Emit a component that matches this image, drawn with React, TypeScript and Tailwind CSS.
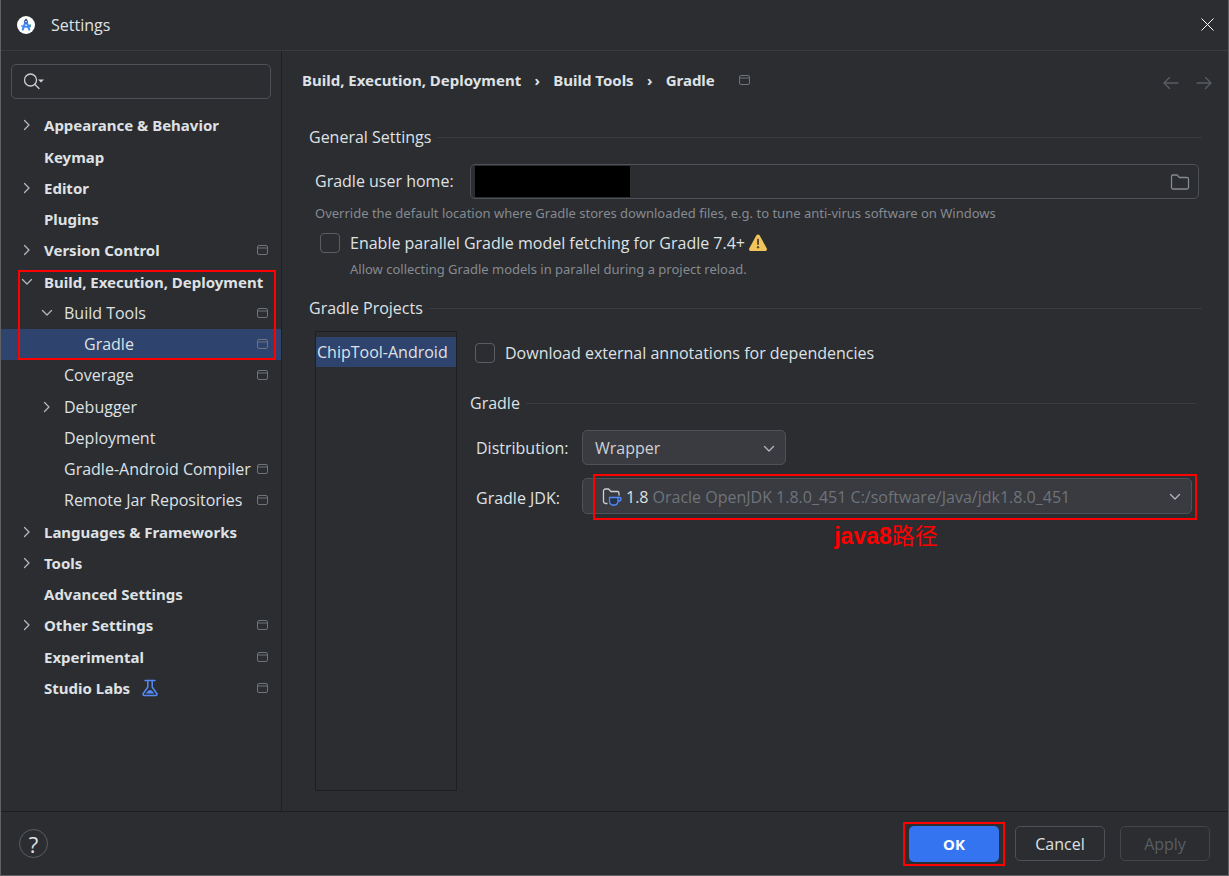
import React, { useState } from 'react';

interface TreeItem {
  label: string;
  level: number;
  /** Only set for nodes that can be expanded. */
  state?: 'open' | 'closed';
  projectLevel?: boolean;
  labs?: boolean;
}

const TREE: TreeItem[] = [
  { label: 'Appearance & Behavior', level: 0, state: 'closed' },
  { label: 'Keymap', level: 0 },
  { label: 'Editor', level: 0, state: 'closed' },
  { label: 'Plugins', level: 0 },
  { label: 'Version Control', level: 0, state: 'closed', projectLevel: true },
  { label: 'Build, Execution, Deployment', level: 0, state: 'open' },
  { label: 'Build Tools', level: 1, state: 'open', projectLevel: true },
  { label: 'Gradle', level: 2, projectLevel: true },
  { label: 'Coverage', level: 1, projectLevel: true },
  { label: 'Debugger', level: 1, state: 'closed' },
  { label: 'Deployment', level: 1 },
  { label: 'Gradle-Android Compiler', level: 1, projectLevel: true },
  { label: 'Remote Jar Repositories', level: 1, projectLevel: true },
  { label: 'Languages & Frameworks', level: 0, state: 'closed' },
  { label: 'Tools', level: 0, state: 'closed' },
  { label: 'Advanced Settings', level: 0 },
  { label: 'Other Settings', level: 0, state: 'closed', projectLevel: true },
  { label: 'Experimental', level: 0, projectLevel: true },
  { label: 'Studio Labs', level: 0, projectLevel: true, labs: true },
];

const INDENT = ['pl-[19px]', 'pl-[39px]', 'pl-[59px]'];

// Bold labels: top level tree nodes, breadcrumbs and the default button.
const BOLD = "font-['Noto_Sans',sans-serif] text-[15px] font-bold";

const StudioLogo = () => (
  <svg width="18" height="18" viewBox="0 0 18 18" aria-hidden="true">
    <circle cx="9" cy="9" r="9" fill="#fff" />
    <path d="M11.500 8.500h2.500v2.500l-2 .5z" fill="#34a853" />
    <path d="M8.600 5.500L5.800 13.500M9.400 5.500l2.800 8" stroke="#4285f4" strokeWidth="2.200" fill="none" strokeLinecap="round" />
    <path d="M4.200 9.600c2.800 1.600 6.400 1.600 9.400 0" stroke="#4285f4" strokeWidth="1.600" fill="none" />
    <circle cx="9" cy="5.400" r="2" fill="#2f5eb5" />
    <rect x="8.200" y="2.800" width="1.600" height="2" fill="#37474f" />
    <circle cx="9" cy="5.600" r="0.800" fill="#fff" />
  </svg>
);

const ProjectIcon = () => (
  <svg className="shrink-0" width="12" height="12" viewBox="0 0 12 12" fill="none" stroke="#6f737a" aria-label="For current project">
    <rect x="0.500" y="1.500" width="10" height="9" rx="1.500" />
    <path d="M0.500 4h10" />
  </svg>
);

const Chevron = ({ open }: { open?: boolean }) => (
  <svg className="shrink-0" width="16" height="16" viewBox="0 0 16 16" fill="none" stroke="#b4b8bf" strokeWidth="1.300" strokeLinecap="round" strokeLinejoin="round" aria-hidden="true">
    {open ? <path d="M3.500 5.500L8 10l4.500-4.500" /> : <path d="M5.500 3.500L10 8l-4.500 4.500" />}
  </svg>
);

const FlaskIcon = () => (
  <svg width="16" height="18" viewBox="0 0 16 18" fill="none" aria-hidden="true">
    <path d="M3 1.500h10M5.800 1.500v6.500L1.300 14.500c-.7 1 0 2 1 2h11.400c1 0 1.700-1 1-2L10.200 8V1.500" stroke="#548af7" strokeWidth="1.500" strokeLinejoin="round" strokeLinecap="round" />
    <path d="M3.800 14.500l2.500-3 2-.6 1.700.8 2.200 2.800z" fill="#548af7" />
  </svg>
);

const WarningIcon = () => (
  <svg width="18" height="18" viewBox="0 0 18 18" aria-hidden="true">
    <path d="M7.300 1.500c.7-1.200 2.700-1.200 3.400 0l7 12.800c.7 1.200-.2 2.700-1.600 2.700H1.900C.5 17-.4 15.500.3 14.300z" fill="#f2c55c" />
    <path d="M9 5.500v4.500" stroke="#5e4d33" strokeWidth="2" strokeLinecap="round" />
    <circle cx="9" cy="13.300" r="1.200" fill="#5e4d33" />
  </svg>
);

const JdkIcon = () => (
  <svg width="20" height="20" viewBox="0 0 20 20" fill="none" strokeWidth="1.300" aria-hidden="true">
    <path d="M5.500 16.500H3.500a2 2 0 0 1-2-2V4a2 2 0 0 1 2-2h3l2.500 2.500h6.500a1.500 1.500 0 0 1 1.500 1.500v2.500" stroke="#ced0d6" />
    <path d="M7.500 10.500h8.500v4a3.500 3.500 0 0 1-3.500 3.500h-1.500a3.500 3.500 0 0 1-3.500-3.500z" fill="#25324d" stroke="#548af7" />
    <path d="M16 10.500h2a1 1 0 0 1 1 1v.5a2 2 0 0 1-2 2h-1" stroke="#548af7" />
  </svg>
);

const SectionTitle = ({ children }: { children: React.ReactNode }) => (
  <div className="flex h-6 items-center gap-[6px]">
    <h2>{children}</h2>
    <span className="h-px flex-1 bg-[#393b40]" />
  </div>
);

interface CheckProps {
  id: string;
  label: string;
}

const Check = ({ id, label }: CheckProps) => (
  <div className="flex items-center gap-[10px]">
    <input id={id} type="checkbox" className="size-5 appearance-none rounded-[4px] border border-[#5a5d63] checked:bg-[#3574f0]" />
    <label htmlFor={id}>{label}</label>
  </div>
);

const App: React.FC = () => {
  const [selected, setSelected] = useState('Gradle');

  return (
    <div className="flex min-h-screen flex-col border border-t-0 border-[#5f6164] bg-[#2b2d30] font-['Open_Sans','Noto_Sans_CJK_SC',sans-serif] text-[16px] leading-5 text-[#dfe1e5]">
      <header className="flex h-[51px] items-center gap-4 border-b border-[#393b40] pr-[10px] pb-px pl-4">
        <StudioLogo />
        <h1 className="flex-1">Settings</h1>
        <button type="button" aria-label="Close" className="p-1">
          <svg width="13" height="13" viewBox="0 0 13 13" stroke="#fff" strokeWidth="1">
            <path d="M0.500 0.500l12 12M12.500 0.500l-12 12" />
          </svg>
        </button>
      </header>

      <div className="flex flex-1">
        <aside className="w-[281px] shrink-0 border-r border-[#1e1f22] pt-[13px]">
          <label className="mx-[10px] flex h-[35px] items-center rounded-[5px] border border-[#4e5157] pb-px pl-[11px]">
            <svg width="22" height="18" viewBox="0 0 22 18" fill="none" stroke="#ced0d6" strokeWidth="1.300" aria-hidden="true">
              <circle cx="7.500" cy="8" r="6" />
              <path d="M12 12.500l4 4" strokeLinecap="round" />
              <path d="M15 7.500h6l-3 3z" fill="#ced0d6" stroke="none" />
            </svg>
            <input type="text" aria-label="Search settings" className="min-w-0 flex-1 bg-transparent px-1 outline-none" />
          </label>

          <nav aria-label="Settings" className="relative mt-[11px]">
            <ul>
              {TREE.map((item) => (
                <li key={item.label} className="h-[31px] nth-[4n+1]:h-8">
                  <button
                    type="button"
                    onClick={() => setSelected(item.label)}
                    className={`flex h-[31px] w-full items-center pr-3 pb-px text-left whitespace-nowrap ${INDENT[item.level]} ${item.level === 0 ? BOLD : ''} ${selected === item.label ? 'bg-[#2e436e]' : ''}`}
                  >
                    <span className="-ml-px flex w-[25px] shrink-0">
                      {item.state && <Chevron open={item.state === 'open'} />}
                    </span>
                    <span>{item.label}</span>
                    {item.labs && <span className="ml-3"><FlaskIcon /></span>}
                    <span className="flex-1" />
                    {item.projectLevel && <ProjectIcon />}
                  </button>
                </li>
              ))}
            </ul>
            <div className="pointer-events-none absolute top-[160px] right-[5px] left-[17px] h-[90px] border-2 border-[#fe0000]" />
          </nav>
        </aside>

        <main className="min-w-0 flex-1 pt-[17px] pl-[20px]">
          <div className="flex h-6 items-center pr-4">
            <nav aria-label="Breadcrumb" className={`flex flex-1 items-center ${BOLD}`}>
              <a href="#build">Build, Execution, Deployment</a>
              <span className="w-8 text-center">›</span>
              <a href="#tools">Build Tools</a>
              <span className="w-8 text-center">›</span>
              <span>Gradle</span>
              <span className="ml-6"><ProjectIcon /></span>
            </nav>
            <div className="flex gap-[17px] pt-[6px]">
              <button type="button" aria-label="Back">
                <svg width="16" height="14" viewBox="0 0 16 14" fill="none" stroke="#5a5d63" strokeWidth="1.300" strokeLinecap="round" strokeLinejoin="round">
                  <path d="M15 7H1M6.500 1.500L1 7l5.500 5.500" />
                </svg>
              </button>
              <button type="button" aria-label="Forward">
                <svg width="16" height="14" viewBox="0 0 16 14" fill="none" stroke="#5a5d63" strokeWidth="1.300" strokeLinecap="round" strokeLinejoin="round">
                  <path d="M1 7h14M9.500 1.500L15 7l-5.500 5.500" />
                </svg>
              </button>
            </div>
          </div>

          <section className="mt-[33px] pr-[26px] pl-[7px]">
            <SectionTitle>General Settings</SectionTitle>
            <div className="mt-[15px] -mr-px flex items-center pr-1 pl-[6px]">
              <label htmlFor="home" className="w-[155px] shrink-0 pb-[2px]">Gradle user home:</label>
              <div className="flex h-[35px] flex-1 items-center rounded-[5px] border border-[#4e5157] pr-2 pl-1">
                <span className="h-[31px] w-[155px] bg-black" />
                <input id="home" type="text" className="h-full min-w-0 flex-1 bg-transparent outline-none" />
                <button type="button" aria-label="Browse">
                  <svg width="20" height="18" viewBox="0 0 20 18" fill="none" stroke="#868a91" strokeWidth="1.300">
                    <path d="M1.500 3.500A1.500 1.500 0 0 1 3 2h4l2.500 2.500H17A1.500 1.500 0 0 1 18.500 6v8.500A1.500 1.500 0 0 1 17 16H3a1.500 1.500 0 0 1-1.500-1.500z" />
                  </svg>
                </button>
              </div>
            </div>
            <p className="mt-1 pl-[6px] font-['Noto_Sans',sans-serif] text-[13px] text-[#868a91]">
              Override the default location where Gradle stores downloaded files, e.g. to tune anti-virus software on Windows
            </p>
            <div className="mt-[10px] flex items-center gap-1 pl-[11px]">
              <Check id="parallel" label="Enable parallel Gradle model fetching for Gradle 7.4+" />
              <WarningIcon />
            </div>
            <p className="mt-[6px] pl-[41px] font-['Noto_Sans',sans-serif] text-[13px] text-[#868a91]">
              Allow collecting Gradle models in parallel during a project reload.
            </p>
          </section>

          <section className="mt-[17px] pr-[26px] pl-[7px]">
            <SectionTitle>Gradle Projects</SectionTitle>
            <div className="mt-[11px] flex pl-[6px]">
              <ul className="h-[460px] w-[142px] shrink-0 border border-[#1e1f22] pt-[5px]">
                <li className="flex h-[30px] items-center bg-[#2e436e] pl-px whitespace-nowrap">ChipTool-Android</li>
              </ul>
              <div className="min-w-0 flex-1 pt-[12px] pl-[13px]">
                <div className="pl-[5px]">
                  <Check id="annotations" label="Download external annotations for dependencies" />
                </div>
                <div className="mt-[28px] pr-[6px]">
                  <SectionTitle>Gradle</SectionTitle>
                </div>
                <div className="mt-[15px] flex items-center pl-[6px]">
                  <label htmlFor="distribution" className="w-[106px] shrink-0">Distribution:</label>
                  <div className="relative w-[204px]">
                    <select id="distribution" className="h-[35px] w-full appearance-none rounded-[5px] border border-[#4e5157] bg-[#393b40] pl-3 text-[#ced0d6]">
                      <option>Wrapper</option>
                      <option>Local installation</option>
                    </select>
                    <span className="pointer-events-none absolute top-[11px] right-[9px]"><Chevron open /></span>
                  </div>
                </div>
                <div className="mt-[13px] flex items-center pl-[6px]">
                  <span id="jdk-label" className="w-[106px] shrink-0 pt-1">Gradle JDK:</span>
                  <div className="relative mr-[10px] min-w-0 flex-1">
                    <button type="button" aria-labelledby="jdk-label" className="flex h-[36px] w-full items-center rounded-[5px] border border-[#4e5157] bg-[#393b40] pt-[2px] pr-2 pl-[19px] whitespace-nowrap">
                      <JdkIcon />
                      <span className="ml-1">1.8</span>
                      <span className="ml-1 flex-1 text-left text-[#6f737a]">Oracle OpenJDK 1.8.0_451 C:/software/Java/jdk1.8.0_451</span>
                      <Chevron open />
                    </button>
                    <div className="pointer-events-none absolute -top-1 -right-[5px] -bottom-[6px] left-[11px] border-2 border-[#fe0000]" />
                  </div>
                </div>
                <p className="mt-[6px] pl-[100px] text-center font-['Liberation_Sans','Noto_Sans_CJK_SC',sans-serif] text-[23px] leading-8 text-[#fe0000]">
                  <b>java8</b>路径
                </p>
              </div>
            </div>
          </section>
        </main>
      </div>

      <footer className="flex h-16 items-center border-t border-[#1e1f22] px-[18px]">
        <button type="button" aria-label="Help" className="flex size-[29px] items-center justify-center rounded-full border border-[#5a5d63] text-[22px]">?</button>
        <div className="flex flex-1 items-center justify-end">
          <span className="mr-[10px] border-2 border-[#fe0000] px-1 py-[2px]">
            <button type="button" className={`block h-9 w-[90px] rounded-[5px] bg-[#3574f0] text-white ${BOLD}`}>OK</button>
          </span>
          <button type="button" className="mr-[15px] h-[35px] w-[90px] rounded-[5px] border border-[#4e5157]">Cancel</button>
          <button type="button" disabled className="h-[35px] w-[90px] rounded-[5px] border border-[#43454a] text-[#5a5d63]">Apply</button>
        </div>
      </footer>
    </div>
  );
};

export default App;
